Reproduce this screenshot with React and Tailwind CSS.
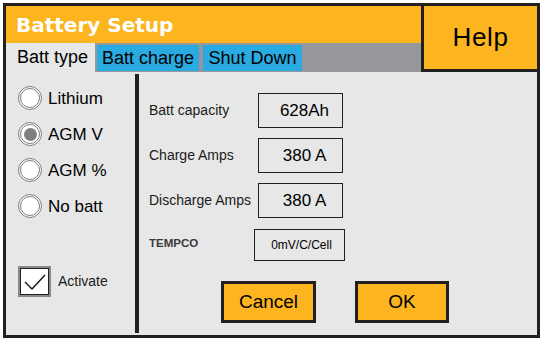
import React, { useState } from 'react';

const ORANGE = 'bg-[#fcb51e]';

const Radio = ({ label, checked, onClick }) => (
  <div className="flex items-center h-[24px] cursor-pointer" onClick={onClick}>
    <span className="w-[24px] h-[24px] rounded-full border-[3px] border-double border-[#7d7d7d] bg-white flex items-center justify-center">
      {checked && <span className="w-[13px] h-[13px] rounded-full bg-[#7f7f7f]" />}
    </span>
    <span className="ml-[6px] text-[17px] text-black leading-none">{label}</span>
  </div>
);

const Field = ({ label, value, labelW = 'w-[109px]' }) => (
  <div className="flex items-center">
    <span className={`${labelW} text-[14px] text-[#1a1a1a]`}>{label}</span>
    <div className="w-[85px] h-[35px] border border-[#231f20] flex items-center justify-center pl-[8px] text-[17px] text-black">
      {value}
    </div>
  </div>
);

const App = () => {
  const [battType, setBattType] = useState('AGM V');
  const [activate, setActivate] = useState(true);

  return (
    <div className="w-[549px] h-[345px] bg-white pt-[3px] pl-[3px]" style={{ fontFamily: '"Liberation Sans", Arial, sans-serif' }}>
      <div className="w-[537px] h-[335px] border-[3px] border-[#231f20] bg-[#e6e7e6] flex flex-col">
        {/* top: title + tabs, help */}
        <div className="flex h-[66px]">
          <div className="flex-1 flex flex-col">
            <div className={`h-[37px] ${ORANGE} flex items-center pl-[10px]`}>
              <span className="text-white font-bold text-[20px] font-['DejaVu_Sans',sans-serif]">Battery Setup</span>
            </div>
            <div className="h-[29px] bg-[#97979b] flex">
              <div className="w-[89px] bg-[#e6e7e6] flex items-center pl-[11px] text-[18px] text-black">Batt type</div>
              <div className="w-[102px] ml-[2px] mt-[2px] mb-[1px] bg-[#29abe2] flex items-center justify-center text-[18px] text-black">Batt charge</div>
              <div className="w-[99px] ml-[4px] mt-[2px] mb-[1px] bg-[#29abe2] flex items-center justify-center text-[18px] text-black">Shut Down</div>
            </div>
          </div>
          <button className={`w-[116px] h-[66px] ${ORANGE} border-l-[3px] border-b-[3px] border-[#231f20] flex items-center justify-center text-[26px] tracking-[0.6px] text-black`}>
            Help
          </button>
        </div>

        {/* body */}
        <div className="flex-1 flex">
          <div className="w-[129px] flex flex-col pl-[12px]">
            <div className="flex flex-col gap-[12px] mt-[14px]">
              {['Lithium', 'AGM V', 'AGM %', 'No batt'].map(t => (
                <Radio key={t} label={t} checked={battType === t} onClick={() => setBattType(t)} />
              ))}
            </div>
            <div className="flex items-center mt-[48px] cursor-pointer" onClick={() => setActivate(!activate)}>
              <span className="w-[33px] h-[31px] border-[2px] border-[#8a8a8a] bg-white flex items-center justify-center">
                <span className="w-full h-full border border-[#231f20] flex items-center justify-center">
                  {activate && (
                    <svg width="24" height="20" viewBox="0 0 24 20">
                      <path d="M2 10 L9 17 L22 3" fill="none" stroke="#111" strokeWidth="1.4" />
                    </svg>
                  )}
                </span>
              </span>
              <span className="ml-[7px] text-[14px] text-[#1a1a1a]">Activate</span>
            </div>
          </div>

          <div className="w-[4px] bg-[#231f20] my-[2px]" />

          <div className="flex-1 flex flex-col pl-[10px] pt-[21px]">
            <div className="flex flex-col gap-[10px]">
              <Field label="Batt capacity" value="628Ah" />
              <Field label="Charge Amps" value="380 A" />
              <Field label="Discharge Amps" value="380 A" />
            </div>
            <div className="flex items-center mt-[11px]">
              <span className="w-[105px] text-[11.5px] font-bold text-[#3a3a3a] -mt-[2px]">TEMPCO</span>
              <div className="w-[91px] h-[32px] border border-[#231f20] flex items-center justify-center pl-[4px] text-[12px] text-black">
                0mV/C/Cell
              </div>
            </div>
            <div className="flex mt-[20px] ml-[72px] gap-[39px]">
              <button className={`w-[95px] h-[42px] ${ORANGE} border-[3px] border-[#231f20] text-[19px] text-black`}>Cancel</button>
              <button className={`w-[94px] h-[42px] ${ORANGE} border-[3px] border-[#231f20] text-[19px] text-black`}>OK</button>
            </div>
          </div>
        </div>
      </div>
    </div>
  );
};

export default App;
